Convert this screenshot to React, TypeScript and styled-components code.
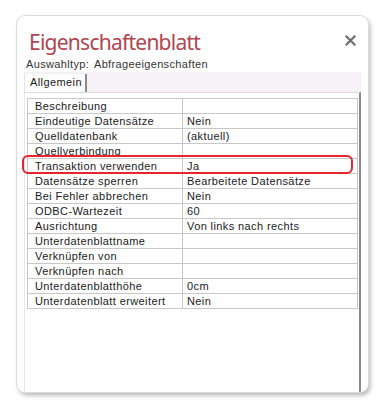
import styled, { createGlobalStyle } from 'styled-components';

const GlobalStyle = createGlobalStyle`
  html, body {
    margin: 0;
    padding: 0;
    background: #ffffff;
  }
`;

interface Property {
  name: string;
  value: string;
}

const properties: Property[] = [
  { name: 'Beschreibung', value: '' },
  { name: 'Eindeutige Datensätze', value: 'Nein' },
  { name: 'Quelldatenbank', value: '(aktuell)' },
  { name: 'Quellverbindung', value: '' },
  { name: 'Transaktion verwenden', value: 'Ja' },
  { name: 'Datensätze sperren', value: 'Bearbeitete Datensätze' },
  { name: 'Bei Fehler abbrechen', value: 'Nein' },
  { name: 'ODBC-Wartezeit', value: '60' },
  { name: 'Ausrichtung', value: 'Von links nach rechts' },
  { name: 'Unterdatenblattname', value: '' },
  { name: 'Verknüpfen von', value: '' },
  { name: 'Verknüpfen nach', value: '' },
  { name: 'Unterdatenblatthöhe', value: '0cm' },
  { name: 'Unterdatenblatt erweitert', value: 'Nein' },
];

const HIGHLIGHT_ROW = 4;
const ROW_HEIGHT = 15;

const Page = styled.div`
  padding: 16px 0 0 17px;
  height: 410px;
  box-sizing: border-box;
`;

const Window = styled.div`
  width: 351px;
  height: 376px;
  box-sizing: border-box;
  background: #ffffff;
  border-radius: 8px;
  box-shadow: 0 0 0 1px #dcdcdc, 2px 3px 5px rgba(0, 0, 0, 0.32);
  display: flex;
  flex-direction: column;
  padding: 0 7px;
  overflow: hidden;
`;

const Header = styled.div`
  display: flex;
  justify-content: space-between;
  align-items: flex-start;
  padding: 12px 5px 0 5px;
`;

const Title = styled.h1`
  margin: 0;
  font-family: 'Noto Sans', sans-serif;
  font-weight: 400;
  font-size: 21px;
  letter-spacing: -0.75px;
  line-height: 28px;
  color: #b04450;
`;

const CloseButton = styled.button`
  border: 0;
  background: none;
  padding: 0;
  margin-top: 7px;
  width: 11px;
  height: 11px;
  cursor: pointer;
  display: flex;
`;

const Subtitle = styled.div`
  font-family: 'Liberation Sans', Arial, sans-serif;
  font-size: 11px;
  letter-spacing: 0.35px;
  line-height: 14px;
  color: #333333;
  padding-left: 2px;
  margin-top: 1px;
  word-spacing: 2px;
`;

const TabBar = styled.div`
  margin-top: 1px;
  height: 20px;
  background: #f6f1f4;
  display: flex;
  align-items: flex-end;
`;

const Tab = styled.div<{ $active?: boolean }>`
  height: 18px;
  box-sizing: border-box;
  padding: 1px 3px 0 5px;
  background: ${(p) => (p.$active ? '#ffffff' : 'transparent')};
  border-right: 2px solid #8a8a8a;
  border-left: 1px solid #e8e0e4;
  font-family: 'Liberation Sans', Arial, sans-serif;
  font-size: 11px;
  letter-spacing: 0.4px;
  line-height: 15px;
  color: #1a1a1a;
`;

const Content = styled.div`
  flex: 1;
  border-top: 1px solid #e2dade;
  border-left: 1px solid #ece4e8;
  border-right: 2px solid #8a8a8a;
  padding: 5px 3px 0 2px;
`;

const TableWrap = styled.div`
  position: relative;
`;

const Table = styled.table`
  width: 331px;
  border-collapse: collapse;
  table-layout: fixed;
  font-family: 'Liberation Sans', Arial, sans-serif;
  font-size: 11px;
  letter-spacing: 0.4px;
  color: #1a1a1a;
`;

const Cell = styled.td<{ $name?: boolean }>`
  height: ${ROW_HEIGHT - 1}px;
  padding: 0 0 0 ${(p) => (p.$name ? 7 : 4)}px;
  border: 1px solid #c8c8c8;
  line-height: 13px;
  white-space: nowrap;
  overflow: hidden;
  width: ${(p) => (p.$name ? '147px' : 'auto')};
`;

const Highlight = styled.div`
  position: absolute;
  left: -5px;
  width: 327px;
  height: 15px;
  border: 2px solid #e8242c;
  border-radius: 6px;
  pointer-events: none;
`;

function CloseIcon() {
  return (
    <svg width="11" height="11" viewBox="0 0 11 11">
      <path d="M1.5 1.5 L9.5 9.5 M9.5 1.5 L1.5 9.5" stroke="#6e6e6e" strokeWidth="2.2" strokeLinecap="square" />
    </svg>
  );
}

export default function App() {
  return (
    <Page>
      <GlobalStyle />
      <Window>
        <Header>
          <Title>Eigenschaftenblatt</Title>
          <CloseButton aria-label="Schließen">
            <CloseIcon />
          </CloseButton>
        </Header>
        <Subtitle>Auswahltyp: Abfrageeigenschaften</Subtitle>
        <TabBar>
          <Tab $active>Allgemein</Tab>
        </TabBar>
        <Content>
          <TableWrap>
            <Table>
              <tbody>
                {properties.map((p) => (
                  <tr key={p.name}>
                    <Cell $name>{p.name}</Cell>
                    <Cell>{p.value}</Cell>
                  </tr>
                ))}
              </tbody>
            </Table>
            <Highlight style={{ top: HIGHLIGHT_ROW * ROW_HEIGHT - 3 }} />
          </TableWrap>
        </Content>
      </Window>
    </Page>
  );
}
